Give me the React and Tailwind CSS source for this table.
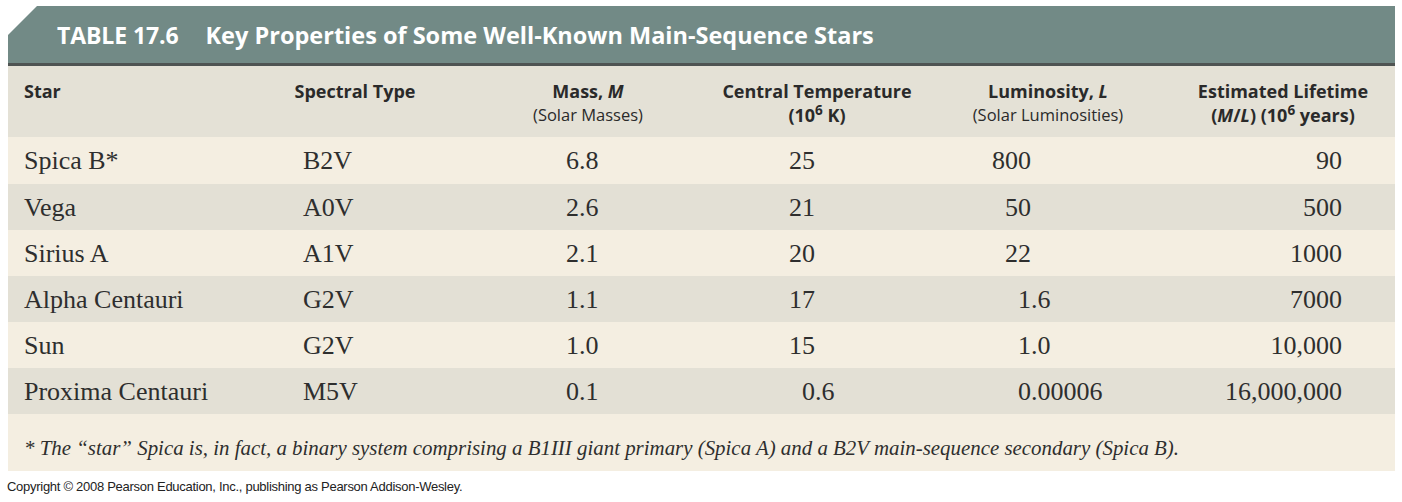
import React from "react";

const rows = [
  { star: "Spica B*", type: "B2V", mass: ["6", ".8"], temp: ["25", ""], lum: ["800", ""], life: "90" },
  { star: "Vega", type: "A0V", mass: ["2", ".6"], temp: ["21", ""], lum: ["50", ""], life: "500" },
  { star: "Sirius A", type: "A1V", mass: ["2", ".1"], temp: ["20", ""], lum: ["22", ""], life: "1000" },
  { star: "Alpha Centauri", type: "G2V", mass: ["1", ".1"], temp: ["17", ""], lum: ["1", ".6"], life: "7000" },
  { star: "Sun", type: "G2V", mass: ["1", ".0"], temp: ["15", ""], lum: ["1", ".0"], life: "10,000" },
  { star: "Proxima Centauri", type: "M5V", mass: ["0", ".1"], temp: ["0", ".6"], lum: ["0", ".00006"], life: "16,000,000" },
];

const cols = "grid grid-cols-[222px_250px_216px_242px_220px_237px]";

export default function App() {
  return (
    <div className="bg-white w-[1402px] h-[502px] pl-[8px] pt-[6px]">
      <div className="w-[1387px]">
        {/* Banner */}
        <div className="h-[57px] bg-[#728a86] flex items-center pl-[49px] pt-[2px] [clip-path:polygon(29px_0,100%_0,100%_100%,0_100%,0_29px)] [font-family:'Open_Sans',Lato,sans-serif]">
          <span className="text-white font-bold text-[23px] tracking-[-0.1px]">TABLE 17.6</span>
          <span className="text-white font-bold text-[23.5px] ml-[27px]">
            Key Properties of Some Well-Known Main-Sequence Stars
          </span>
        </div>
        <div className="h-[3px] bg-[#4f5453]" />

        {/* Header row */}
        <div className={`${cols} h-[71px] bg-[#e4e1d6] pt-[13px] text-[#2a2a2a] [font-family:'Open_Sans',Lato,sans-serif]`}>
          <div className="pl-[16px] font-bold text-[18px] leading-[24px]">Star</div>
          <div className="text-center font-bold text-[18px] leading-[24px]">Spectral Type</div>
          <div className="text-center">
            <div className="font-bold text-[18px] leading-[24px]">Mass, <i>M</i></div>
            <div className="text-[16.5px] leading-[23px]">(Solar Masses)</div>
          </div>
          <div className="text-center font-bold text-[18px] leading-[24px]">
            <div>Central Temperature</div>
            <div>(10<sup>6</sup> K)</div>
          </div>
          <div className="text-center">
            <div className="font-bold text-[18px] leading-[24px]">Luminosity, <i>L</i></div>
            <div className="text-[16.5px] leading-[23px]">(Solar Luminosities)</div>
          </div>
          <div className="text-center pl-[13px] font-bold text-[18px] leading-[24px]">
            <div>Estimated Lifetime</div>
            <div>(<i>M</i>/<i>L</i>) (10<sup>6</sup> years)</div>
          </div>
        </div>

        {/* Data rows */}
        {rows.map((r, idx) => (
          <div
            key={r.star}
            className={`${cols} ${idx === 0 ? "h-[47px]" : "h-[46px]"} ${idx % 2 === 0 ? "bg-[#f4eee1]" : "bg-[#e3e0d5]"} items-center text-[26px] text-[#2e2e2e] [font-family:'Liberation_Serif','Times_New_Roman',serif]`}
          >
            <div className="pl-[16px] whitespace-nowrap">{r.star}</div>
            <div className="pl-[73px]">{r.type}</div>
            <div className="flex">
              <span className="w-[99px] text-right">{r.mass[0]}</span>
              <span>{r.mass[1]}</span>
            </div>
            <div className="flex">
              <span className="w-[119px] text-right">{r.temp[0]}</span>
              <span>{r.temp[1]}</span>
            </div>
            <div className="flex">
              <span className="w-[93px] text-right">{r.lum[0]}</span>
              <span>{r.lum[1]}</span>
            </div>
            <div className="text-right pr-[53px]">{r.life}</div>
          </div>
        ))}

        {/* Footnote */}
        <div className="h-[57px] bg-[#f4eee1] pl-[16px] pt-[21px] text-[20.9px] leading-[26px] italic text-[#2e2e2e] whitespace-nowrap [font-family:'Liberation_Serif','Times_New_Roman',serif]">
          * The “star” Spica is, in fact, a binary system comprising a B1III giant primary (Spica A) and a B2V main-sequence secondary (Spica B).
        </div>
      </div>

      {/* Copyright */}
      <div className="mt-[8px] -ml-[1px] text-[13px] leading-[16px] tracking-[-0.28px] text-[#222] [font-family:'Liberation_Sans',Arial,sans-serif]">
        Copyright © 2008 Pearson Education, Inc., publishing as Pearson Addison-Wesley.
      </div>
    </div>
  );
}
